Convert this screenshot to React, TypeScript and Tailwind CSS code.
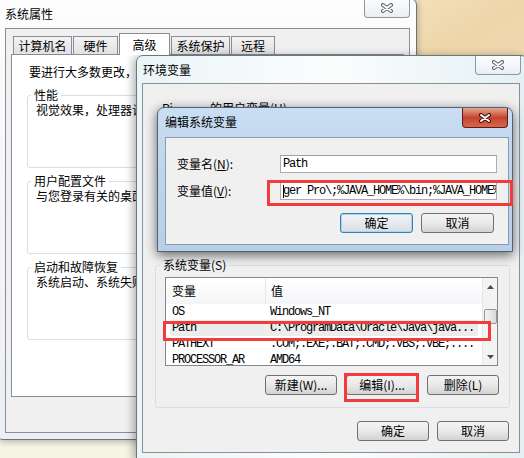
const cjk = "font-['Noto_Sans_CJK_SC','Noto_Sans',sans-serif]";
const mono = "font-['Liberation_Mono',monospace] text-[12px] tracking-[-1.2px]";

function CloseBtn({ active, className }: { active?: boolean; className?: string }) {
  return (
    <div
      className={
        active
          ? `w-[46px] h-[20px] rounded-b-[4px] border border-t-0 border-[#5c1e14] bg-linear-to-b from-[#e7a592] via-[#c4452f] to-[#d8654c] flex items-center justify-center ${className}`
          : `w-[46px] h-[19px] rounded-b-[4px] border border-t-0 border-[#8e97a0] bg-linear-to-b from-[#fdfdfe] to-[#eaeff3] flex items-center justify-center ${className}`
      }
    >
      <svg width="12" height="10" viewBox="0 0 12 10">
        <path d="M2 2 L10 8 M10 2 L2 8" stroke={active ? "#3b0e07" : "#5b636c"} strokeWidth="4" strokeLinecap="round" />
        <path d="M2 2 L10 8 M10 2 L2 8" stroke="#ffffff" strokeWidth="2" strokeLinecap="round" />
      </svg>
    </div>
  );
}

function Btn({ children, def, w }: { children: React.ReactNode; def?: boolean; w: string }) {
  return (
    <div
      className={
        def
          ? `${w} h-[20px] rounded-[3px] border border-[#3c7fb1] bg-linear-to-b from-[#f2f5f8] to-[#d9dee4] shadow-[inset_0_0_0_1px_#9fd7f5] flex items-center justify-center`
          : `${w} h-[20px] rounded-[3px] border border-[#707070] bg-linear-to-b from-[#f4f4f4] via-[#e9e9e9] to-[#d3d3d3] flex items-center justify-center`
      }
    >
      {children}
    </div>
  );
}

function Group({ label, text, className }: { label: string; text: string; className: string }) {
  return (
    <fieldset className={`w-[370px] h-[81px] shrink-0 border border-[#d5dfe5] rounded-[3px] pl-[3px] ${className}`}>
      <legend className="px-[3px] leading-4">{label}</legend>
      <div className="ml-[5px] mt-[-1px] whitespace-nowrap">{text}</div>
    </fieldset>
  );
}

function SysProps() {
  const tab = "h-[18px] border border-b-0 border-[#898c95] bg-linear-to-b from-[#f3f3f3] to-[#e1e1e1] flex items-center justify-center";
  return (
    <div className="absolute left-[-4px] top-[-2px] w-[421px] h-[442px] rounded-[7px] border border-[#6f7479] bg-linear-to-b from-[#fdfdfd] via-[#f3f5f7] to-[#eceff2] flex flex-col shadow-[1px_2px_6px_rgba(0,0,0,0.25)]">
      <div className="h-[29px] shrink-0 flex justify-between items-start">
        <div className="ml-[8px] mt-[7px]">系统属性</div>
        <CloseBtn className="mr-[6px]" />
      </div>
      <div className="flex-1 ml-[8px] mr-[6px] mb-[6px] border border-[#8a8f95] bg-[#f0f0f0] flex flex-col px-[5px] pt-[4px]">
        <div className="flex items-end gap-[1px] pl-[2px] h-[21px] shrink-0">
          <div className={`w-[59px] ${tab}`}>计算机名</div>
          <div className={`w-[45px] ${tab}`}>硬件</div>
          <div className="w-[51px] h-[22px] mb-[-1px] relative z-10 border border-b-0 border-[#898c95] bg-white flex items-center justify-center">高级</div>
          <div className={`w-[59px] ${tab}`}>系统保护</div>
          <div className={`w-[44px] ${tab}`}>远程</div>
        </div>
        <div className="h-[343px] shrink-0 border border-[#898c95] bg-white flex flex-col pl-[15px] pt-[9px] overflow-hidden">
          <div className="pl-[2px] whitespace-nowrap">要进行大多数更改，您必须作为管理员登录。</div>
          <Group className="mt-[7px]" label="性能" text="视觉效果，处理器计划，内存使用，以及虚拟内存" />
          <Group className="mt-[5px]" label="用户配置文件" text="与您登录有关的桌面设置" />
          <Group className="mt-[5px]" label="启动和故障恢复" text="系统启动、系统失败和调试信息" />
        </div>
      </div>
    </div>
  );
}

const rows = [
  ["OS", "Windows_NT"],
  ["Path", "C:\\ProgramData\\Oracle\\Java\\java..."],
  ["PATHEXT", ".COM;.EXE;.BAT;.CMD;.VBS;.VBE;...."],
  ["PROCESSOR_AR", "AMD64"],
];

function EnvVars() {
  return (
    <div className="absolute left-[136px] top-[55px] w-[392px] h-[405px] rounded-t-[7px] border border-[#6c7680] bg-linear-to-r from-[#eaf5f8] via-[#fbfdfd] to-[#e4f1f4] flex flex-col shadow-[-3px_1px_8px_rgba(0,0,0,0.3)]">
      <div className="h-[27px] shrink-0 flex justify-between items-start">
        <div className="ml-[6px] mt-[6px]">环境变量</div>
        <CloseBtn className="mr-[6px] h-[18px]" />
      </div>
      <div className="flex-1 ml-[5px] mr-[7px] mb-[6px] border border-[#8a8f95] bg-[#f0f0f0] flex flex-col">
        <div className="h-[173px] shrink-0 pl-[19px] pt-[16px] flex items-start">
          <span>Ri</span>
          <span className="ml-[37px]">的用户变量(U)</span>
        </div>
        <fieldset className="ml-[12px] w-[355px] h-[151px] shrink-0 border border-[#d5dfe5] rounded-[3px] pl-[4px]">
          <legend className="px-[3px] leading-4">系统变量(S)</legend>
          <div className="ml-[5px] mt-[4px] w-[334px]">
            <div className="w-[333px] h-[89px] border border-[#828790] bg-white flex">
              <div className="flex-1 flex flex-col overflow-hidden">
                <div className="h-[26px] shrink-0 flex bg-linear-to-b from-white to-[#f4f5f7]">
                  <div className="w-[100px] border-r border-[#e3e5e8] pl-[6px] flex items-center">变量</div>
                  <div className="pl-[5px] flex items-center">值</div>
                </div>
                {rows.map(([k, v]) => (
                  <div
                    key={k}
                    className={
                      k === "Path"
                        ? "h-[16px] shrink-0 mx-[4px] px-[2px] flex items-center bg-[#ececec] rounded-[2px]"
                        : "h-[16px] shrink-0 mx-[4px] px-[2px] flex items-center"
                    }
                  >
                    <span className={`w-[98px] shrink-0 whitespace-nowrap ${mono}`}>{k}</span>
                    <span className={`whitespace-nowrap ${mono}`}>{v}</span>
                  </div>
                ))}
              </div>
              <div className="w-[15px] shrink-0 bg-[#f3f3f3] border-l border-[#e6e6e6] flex flex-col items-center">
                <div className="h-[17px] shrink-0 flex items-center justify-center">
                  <svg width="7" height="4" viewBox="0 0 7 4"><path d="M3.5 0 L7 4 L0 4 Z" fill="#4d4d4d" /></svg>
                </div>
                <div className="mt-[14px] w-[13px] h-[15px] shrink-0 rounded-[2px] border border-[#979797] bg-linear-to-r from-[#f3f3f3] to-[#d9d9d9]" />
                <div className="flex-1" />
                <div className="h-[17px] shrink-0 flex items-center justify-center">
                  <svg width="7" height="4" viewBox="0 0 7 4"><path d="M0 0 L7 0 L3.5 4 Z" fill="#4d4d4d" /></svg>
                </div>
              </div>
            </div>
            <div className="mt-[9px] flex justify-end gap-[9px]">
              <Btn w="w-[72px]">新建(W)...</Btn>
              <Btn w="w-[72px]">编辑(I)...</Btn>
              <Btn w="w-[72px]">删除(L)</Btn>
            </div>
          </div>
        </fieldset>
        <div className="mt-[13px] flex justify-end gap-[8px] pr-[10px]">
          <Btn w="w-[72px]">确定</Btn>
          <Btn w="w-[72px]">取消</Btn>
        </div>
      </div>
    </div>
  );
}

function EditVar() {
  const input = "w-[217px] h-[18px] border border-[#abadb3] border-t-[#9da0a7] bg-white flex items-center pl-[2px] overflow-hidden whitespace-nowrap";
  return (
    <div className="absolute left-[157px] top-[107px] w-[356px] h-[145px] rounded-t-[7px] border border-[#4e6479] bg-linear-to-b from-[#c9def3] via-[#bcd4ed] to-[#b7cfe9] flex flex-col shadow-[0_3px_12px_rgba(0,0,0,0.6)]">
      <div className="h-[29px] shrink-0 flex justify-between items-start">
        <div className="ml-[7px] mt-[6px]">编辑系统变量</div>
        <CloseBtn active className="mr-[4px]" />
      </div>
      <div className="flex-1 ml-[7px] mr-[3px] mb-[6px] border border-[#8e9aa6] bg-[#f0f0f0] flex flex-col pl-[11px] pr-[11px] pt-[17px]">
        <div className="h-[18px] flex items-center">
          <div className="w-[103px] shrink-0">变量名(<span className="underline">N</span>):</div>
          <div className={input}>
            <span className={mono}>Path</span>
          </div>
        </div>
        <div className="mt-[9px] h-[18px] flex items-center">
          <div className="w-[103px] shrink-0">变量值(<span className="underline">V</span>):</div>
          <div className={input}>
            <span className="w-[1px] h-[13px] bg-black shrink-0" />
            <span className={`ml-[-1px] ${mono}`}>ger Pro\;%JAVA_HOME%\bin;%JAVA_HOME%\jre\bin</span>
          </div>
        </div>
        <div className="mt-[13px] flex justify-end gap-[8px] pr-[3px]">
          <Btn def w="w-[73px]">确定</Btn>
          <Btn w="w-[73px]">取消</Btn>
        </div>
      </div>
    </div>
  );
}

export default function App() {
  return (
    <div className={`relative w-[524px] h-[458px] overflow-hidden bg-[#f7f5e6] text-black text-[12px] leading-4 ${cjk}`}>
      <div className="absolute left-[405px] top-0 w-[119px] h-[70px] bg-linear-to-br from-[#f3e0bb] via-[#eed6aa] to-[#efd9b0]" />
      <SysProps />
      <EnvVars />
      <EditVar />
      {/* red marks */}
      <div className="absolute left-[267px] top-[180px] w-[246px] h-[26px] border-[3px] border-[#f23b3b]" />
      <div className="absolute left-[163px] top-[321px] w-[328px] h-[20px] border-[3px] border-[#f23b3b]" />
      <div className="absolute left-[344px] top-[373px] w-[75px] h-[29px] border-[3px] border-[#f23b3b]" />
    </div>
  );
}
